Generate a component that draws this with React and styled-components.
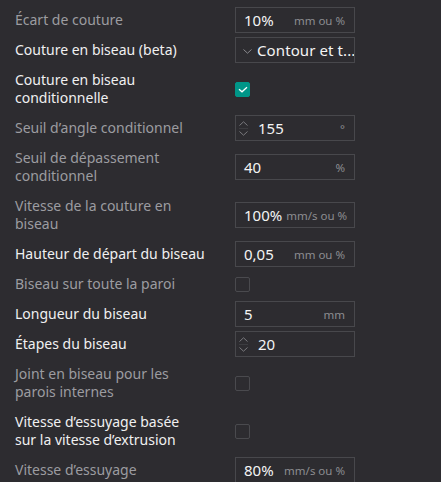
import styled, { createGlobalStyle } from "styled-components";

const GlobalStyle = createGlobalStyle`
  html, body {
    margin: 0;
    padding: 0;
    background: #2d2c30;
  }
  body {
    font-family: "Noto Sans", "Open Sans", sans-serif;
    -webkit-font-smoothing: antialiased;
  }
`;

const rows = [
  { label: "Écart de couture", dim: true, type: "input", value: "10%", unit: "mm ou %" },
  { label: "Couture en biseau (beta)", type: "select", value: "Contour et t..." },
  { label: ["Couture en biseau", "conditionnelle"], type: "check", checked: true },
  { label: "Seuil d’angle conditionnel", dim: true, type: "spin", value: "155", unit: "°" },
  { label: ["Seuil de dépassement", "conditionnel"], dim: true, type: "input", value: "40", unit: "%" },
  { label: ["Vitesse de la couture en", "biseau"], dim: true, type: "input", value: "100%", unit: "mm/s ou %" },
  { label: "Hauteur de départ du biseau", type: "input", value: "0,05", unit: "mm ou %" },
  { label: "Biseau sur toute la paroi", dim: true, type: "check" },
  { label: "Longueur du biseau", type: "input", value: "5", unit: "mm" },
  { label: "Étapes du biseau", type: "spin", value: "20" },
  { label: ["Joint en biseau pour les", "parois internes"], dim: true, type: "check" },
  { label: ["Vitesse d’essuyage basée", "sur la vitesse d’extrusion"], type: "check" },
  { label: "Vitesse d’essuyage", dim: true, type: "input", value: "80%", unit: "mm/s ou %" },
];

const Control = ({ row }) => {
  if (row.type === "check") {
    return (
      <Checkbox $checked={row.checked}>
        {row.checked && (
          <svg width="10" height="7" viewBox="0 0 10 7">
            <path d="M1 3.2 L4 5.8 L9 1.2" fill="none" stroke="#fff" strokeWidth="1.3" />
          </svg>
        )}
      </Checkbox>
    );
  }
  if (row.type === "select") {
    return (
      <Field>
        <Chevron width="9" height="5" viewBox="0 0 9 5">
          <path d="M0.5 0.5 L4.5 4.2 L8.5 0.5" fill="none" stroke="#8a8a8e" strokeWidth="1" />
        </Chevron>
        <SelectText>{row.value}</SelectText>
      </Field>
    );
  }
  return (
    <Field>
      {row.type === "spin" && (
        <Spin>
          <svg width="9" height="5" viewBox="0 0 9 5">
            <path d="M0.5 4.5 L4.5 0.8 L8.5 4.5" fill="none" stroke="#7a7a7e" strokeWidth="1" />
          </svg>
          <SpinLine />
          <svg width="9" height="5" viewBox="0 0 9 5">
            <path d="M0.5 0.5 L4.5 4.2 L8.5 0.5" fill="none" stroke="#7a7a7e" strokeWidth="1" />
          </svg>
        </Spin>
      )}
      <Value>{row.value}</Value>
      {row.unit && <Unit>{row.unit}</Unit>}
    </Field>
  );
};

export default function App() {
  return (
    <>
      <GlobalStyle />
      <Panel>
        {rows.map((row, i) => (
          <Row key={i}>
            <Label $dim={row.dim}>
              {Array.isArray(row.label) ? (
                <>
                  {row.label[0]}
                  <br />
                  {row.label[1]}
                </>
              ) : (
                row.label
              )}
            </Label>
            <Control row={row} />
          </Row>
        ))}
      </Panel>
    </>
  );
}

const Panel = styled.div`
  width: 441px;
  height: 482px;
  overflow: hidden;
  padding: 5px 0 0 15px;
  box-sizing: border-box;
  display: flex;
  flex-direction: column;
`;

const Row = styled.div`
  display: flex;
  align-items: center;
`;

const Label = styled.div`
  width: 220px;
  flex-shrink: 0;
  padding: 6px 0;
  font-size: 14px;
  line-height: 18px;
  color: ${(p) => (p.$dim ? "#9c9ca0" : "#f0f0f0")};
  white-space: nowrap;
`;

const Field = styled.div`
  width: 120px;
  height: 26px;
  box-sizing: border-box;
  border: 1px solid #48484c;
  display: flex;
  align-items: center;
  gap: 4px;
  padding: 0 9px 0 7px;
  overflow: hidden;
`;

const Value = styled.span`
  flex: 1;
  font-size: 15px;
  color: #f4f4f4;
  padding-left: 1px;
`;

const Unit = styled.span`
  font-size: 11.5px;
  color: #8c8c90;
  white-space: nowrap;
`;

const Spin = styled.div`
  display: flex;
  flex-direction: column;
  align-items: center;
  gap: 2px;
  margin: 0 5px 0 -4px;
`;

const SpinLine = styled.div`
  width: 9px;
  height: 1px;
  background: #3c3c40;
`;

const Chevron = styled.svg`
  flex-shrink: 0;
  margin: 2px 1px 0 0;
`;

const SelectText = styled.span`
  font-size: 15px;
  color: #f4f4f4;
  white-space: nowrap;
  letter-spacing: 0.1px;
`;

const Checkbox = styled.div`
  width: 15px;
  height: 15px;
  box-sizing: border-box;
  border-radius: 2px;
  border: 1px solid ${(p) => (p.$checked ? "#009688" : "#4a4a4e")};
  background: ${(p) => (p.$checked ? "#009688" : "transparent")};
  display: flex;
  align-items: center;
  justify-content: center;
`;
